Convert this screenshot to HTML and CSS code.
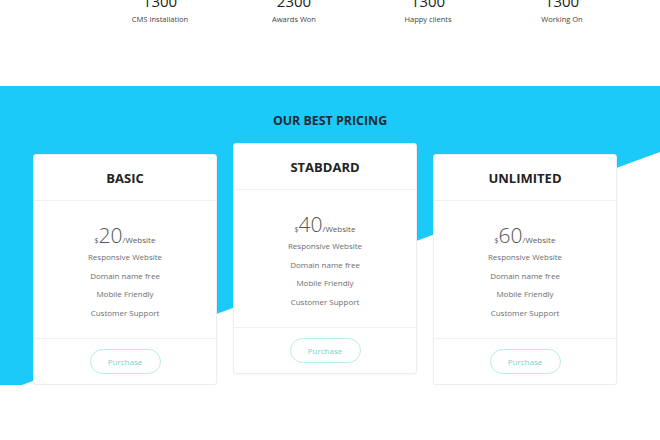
FILE: index.html
```html
<!DOCTYPE html>
<html lang="en">
<head>
    <meta charset="UTF-8">
    <meta name="viewport" content="width=device-width, initial-scale=1.0">
    <title>Our Best Pricing</title>
    <link rel="stylesheet" href="styles.css">
</head>
<body>
    <div class="stats">
        <div class="stat">
            <div class="stat-num">1300</div>
            <div class="stat-label">CMS Installation</div>
        </div>
        <div class="stat">
            <div class="stat-num">2300</div>
            <div class="stat-label">Awards Won</div>
        </div>
        <div class="stat">
            <div class="stat-num">1300</div>
            <div class="stat-label">Happy clients</div>
        </div>
        <div class="stat">
            <div class="stat-num">1300</div>
            <div class="stat-label">Working On</div>
        </div>
    </div>

    <section class="pricing">
        <h2 class="pricing-title">OUR BEST PRICING</h2>
        <div class="plans">
            <div class="plan">
                <div class="plan-head">BASIC</div>
                <div class="plan-body">
                    <div class="price"><span class="cur">$</span><span class="amount">20</span><span class="per">/Website</span></div>
                    <ul class="features">
                        <li>Responsive Website</li>
                        <li>Domain name free</li>
                        <li>Mobile Friendly</li>
                        <li>Customer Support</li>
                    </ul>
                </div>
                <div class="plan-foot"><button class="btn-buy">Purchase</button></div>
            </div>
            <div class="plan plan-main">
                <div class="plan-head">STABDARD</div>
                <div class="plan-body">
                    <div class="price"><span class="cur">$</span><span class="amount">40</span><span class="per">/Website</span></div>
                    <ul class="features">
                        <li>Responsive Website</li>
                        <li>Domain name free</li>
                        <li>Mobile Friendly</li>
                        <li>Customer Support</li>
                    </ul>
                </div>
                <div class="plan-foot"><button class="btn-buy">Purchase</button></div>
            </div>
            <div class="plan">
                <div class="plan-head">UNLIMITED</div>
                <div class="plan-body">
                    <div class="price"><span class="cur">$</span><span class="amount">60</span><span class="per">/Website</span></div>
                    <ul class="features">
                        <li>Responsive Website</li>
                        <li>Domain name free</li>
                        <li>Mobile Friendly</li>
                        <li>Customer Support</li>
                    </ul>
                </div>
                <div class="plan-foot"><button class="btn-buy">Purchase</button></div>
            </div>
        </div>
    </section>
</body>
</html>
```

FILE: styles.css
```css
body {
    margin: 0;
    padding: 0;
    font-family: "Open Sans", "Liberation Sans", sans-serif;
    background: #FFFFFF;
    color: #222222;
    overflow: hidden;
}

/* counters row (page is scrolled a little) */
.stats {
    display: grid;
    grid-template-columns: repeat(4, 134px);
    padding-left: 93px;
    margin-top: -8px;
    height: 94px;
}
.stat {
    text-align: center;
}
.stat-num {
    font-size: 15px;
    line-height: 18px;
    color: #222222;
}
.stat-label {
    margin-top: 4px;
    font-size: 7.5px;
    line-height: 10px;
    color: #444444;
}

/* pricing */
.pricing {
    position: relative;
    padding-top: 27px;
}
.pricing::before {
    content: "";
    position: absolute;
    top: 0;
    left: 0;
    right: 0;
    height: 307px;
    background: #1BCAF8;
    clip-path: polygon(0 0, 100% 0, 100% 66px, 0 100%);
    z-index: 0;
}
.pricing-title {
    position: relative;
    z-index: 1;
    margin: 0;
    text-align: center;
    font-size: 12.4px;
    line-height: 16px;
    font-weight: 700;
    color: #1F2A33;
}
.plans {
    position: relative;
    z-index: 1;
    display: grid;
    grid-template-columns: repeat(3, 184px);
    column-gap: 16px;
    align-items: start;
    padding-left: 33px;
    margin-top: 14px;
}
.plan {
    margin-top: 11px;
    background: #FFFFFF;
    border: 1px solid #EDEDED;
    border-radius: 3px;
    box-shadow: 0 1px 2px rgba(0, 0, 0, 0.04);
    text-align: center;
}
.plan-main {
    margin-top: 0;
}
.plan-head {
    height: 45px;
    line-height: 46px;
    border-bottom: 1px solid #F1F1F1;
    font-size: 13px;
    font-weight: 700;
    color: #222222;
}
.plan-body {
    padding: 22px 0 16px;
}
.price {
    font-size: 21px;
    line-height: 24px;
    margin-bottom: 1px;
    color: #5A5A5A;
}
.cur {
    font-size: 7px;
    line-height: 1;
}
.amount {
    font-weight: 300;
    color: #555555;
}
.per {
    font-size: 8px;
    line-height: 1;
}
.features {
    list-style: none;
    margin: 0;
    padding: 0;
    font-size: 8px;
    line-height: 18.6px;
    color: #6E6E6E;
}
.plan-foot {
    border-top: 1px solid #F1F1F1;
    padding: 9px 0 10px;
}
.btn-buy {
    width: 71px;
    height: 25px;
    padding: 0;
    background: #FFFFFF;
    border: 1px solid #B8EEE8;
    border-radius: 13px;
    font-family: "Open Sans", "Liberation Sans", sans-serif;
    font-size: 8px;
    color: #6DD6CA;
    cursor: pointer;
}
```
